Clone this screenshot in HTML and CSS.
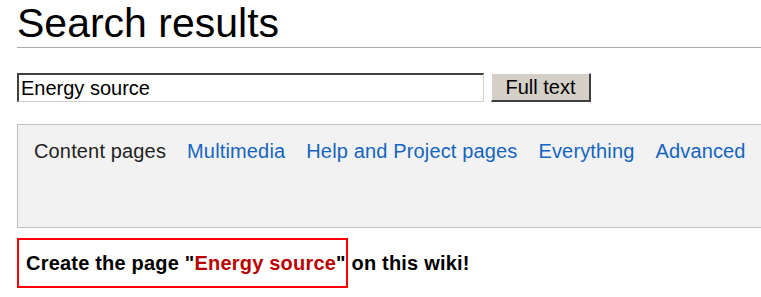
FILE: index.html
```html
<!DOCTYPE html>
<html lang="en">
  <head>
    <meta charset="UTF-8" />
    <meta name="viewport" content="width=device-width, initial-scale=1.0" />
    <title>Search results</title>
    <link rel="stylesheet" href="styles.css">
  </head>
  <body>
    <div class="page">
      <h1 class="page-title">Search results</h1>

      <form class="search-form" onsubmit="return false">
        <input type="text" class="search-input" value="Energy source" />
        <button type="submit" class="search-button">Full text</button>
      </form>

      <!-- Search profile tabs -->
      <div class="search-types">
        <span class="search-type current">Content pages</span>
        <a href="#" class="search-type">Multimedia</a>
        <a href="#" class="search-type">Help and Project pages</a>
        <a href="#" class="search-type">Everything</a>
        <a href="#" class="search-type">Advanced</a>
      </div>

      <div class="create-page">
        Create the page "<a href="#" class="new-link">Energy source</a>" on this wiki!
      </div>
    </div>
  </body>
</html>
```

FILE: styles.css
```css
html {
  overflow: hidden;
}
body {
  margin: 0;
  background: white;
  font-family: "Liberation Sans", Arial, sans-serif;
  color: black;
}
.page {
  width: 800px;
  padding-left: 17px;
}
.page-title {
  margin: 0;
  font-size: 41px;
  font-weight: normal;
  line-height: 46px;
  padding-bottom: 1px;
  border-bottom: 1px solid #aaa;
}
.search-form {
  display: flex;
  gap: 7px;
  margin-top: 25px;
}
.search-input {
  box-sizing: border-box;
  width: 467px;
  height: 29px;
  margin: 0;
  padding: 0 2px;
  font-family: "Liberation Sans", Arial, sans-serif;
  font-size: 20px;
  color: black;
  background: white;
  border-style: solid;
  border-width: 2px 1px 1px 2px;
  border-color: #404040 #d4d0c8 #d4d0c8 #404040;
  outline: none;
}
.search-button {
  box-sizing: border-box;
  width: 100px;
  height: 29px;
  margin: 0;
  padding: 0;
  font-family: "Liberation Sans", Arial, sans-serif;
  font-size: 20px;
  color: black;
  background: #d4d0c8;
  border-style: solid;
  border-width: 1px 2px 2px 1px;
  border-color: #fff #404040 #404040 #fff;
}
.search-types {
  display: flex;
  gap: 21px;
  margin-top: 22px;
  height: 102px;
  box-sizing: content-box;
  padding: 0 16px;
  background: #f2f2f2;
  border: 1px solid #c0c0c0;
  font-size: 20px;
  line-height: 23px;
  letter-spacing: 0.15px;
}
.search-type {
  padding-top: 15px;
  color: #1565c0;
  text-decoration: none;
  white-space: nowrap;
}
.search-type.current {
  color: #222;
}
.create-page {
  box-sizing: border-box;
  width: 331px;
  height: 50px;
  margin-top: 10px;
  padding: 0 7px;
  border: 2px solid red;
  font-size: 20px;
  font-weight: bold;
  line-height: 46px;
  letter-spacing: 0.2px;
  white-space: nowrap;
}
.new-link {
  color: #ba0000;
  text-decoration: none;
}
```
